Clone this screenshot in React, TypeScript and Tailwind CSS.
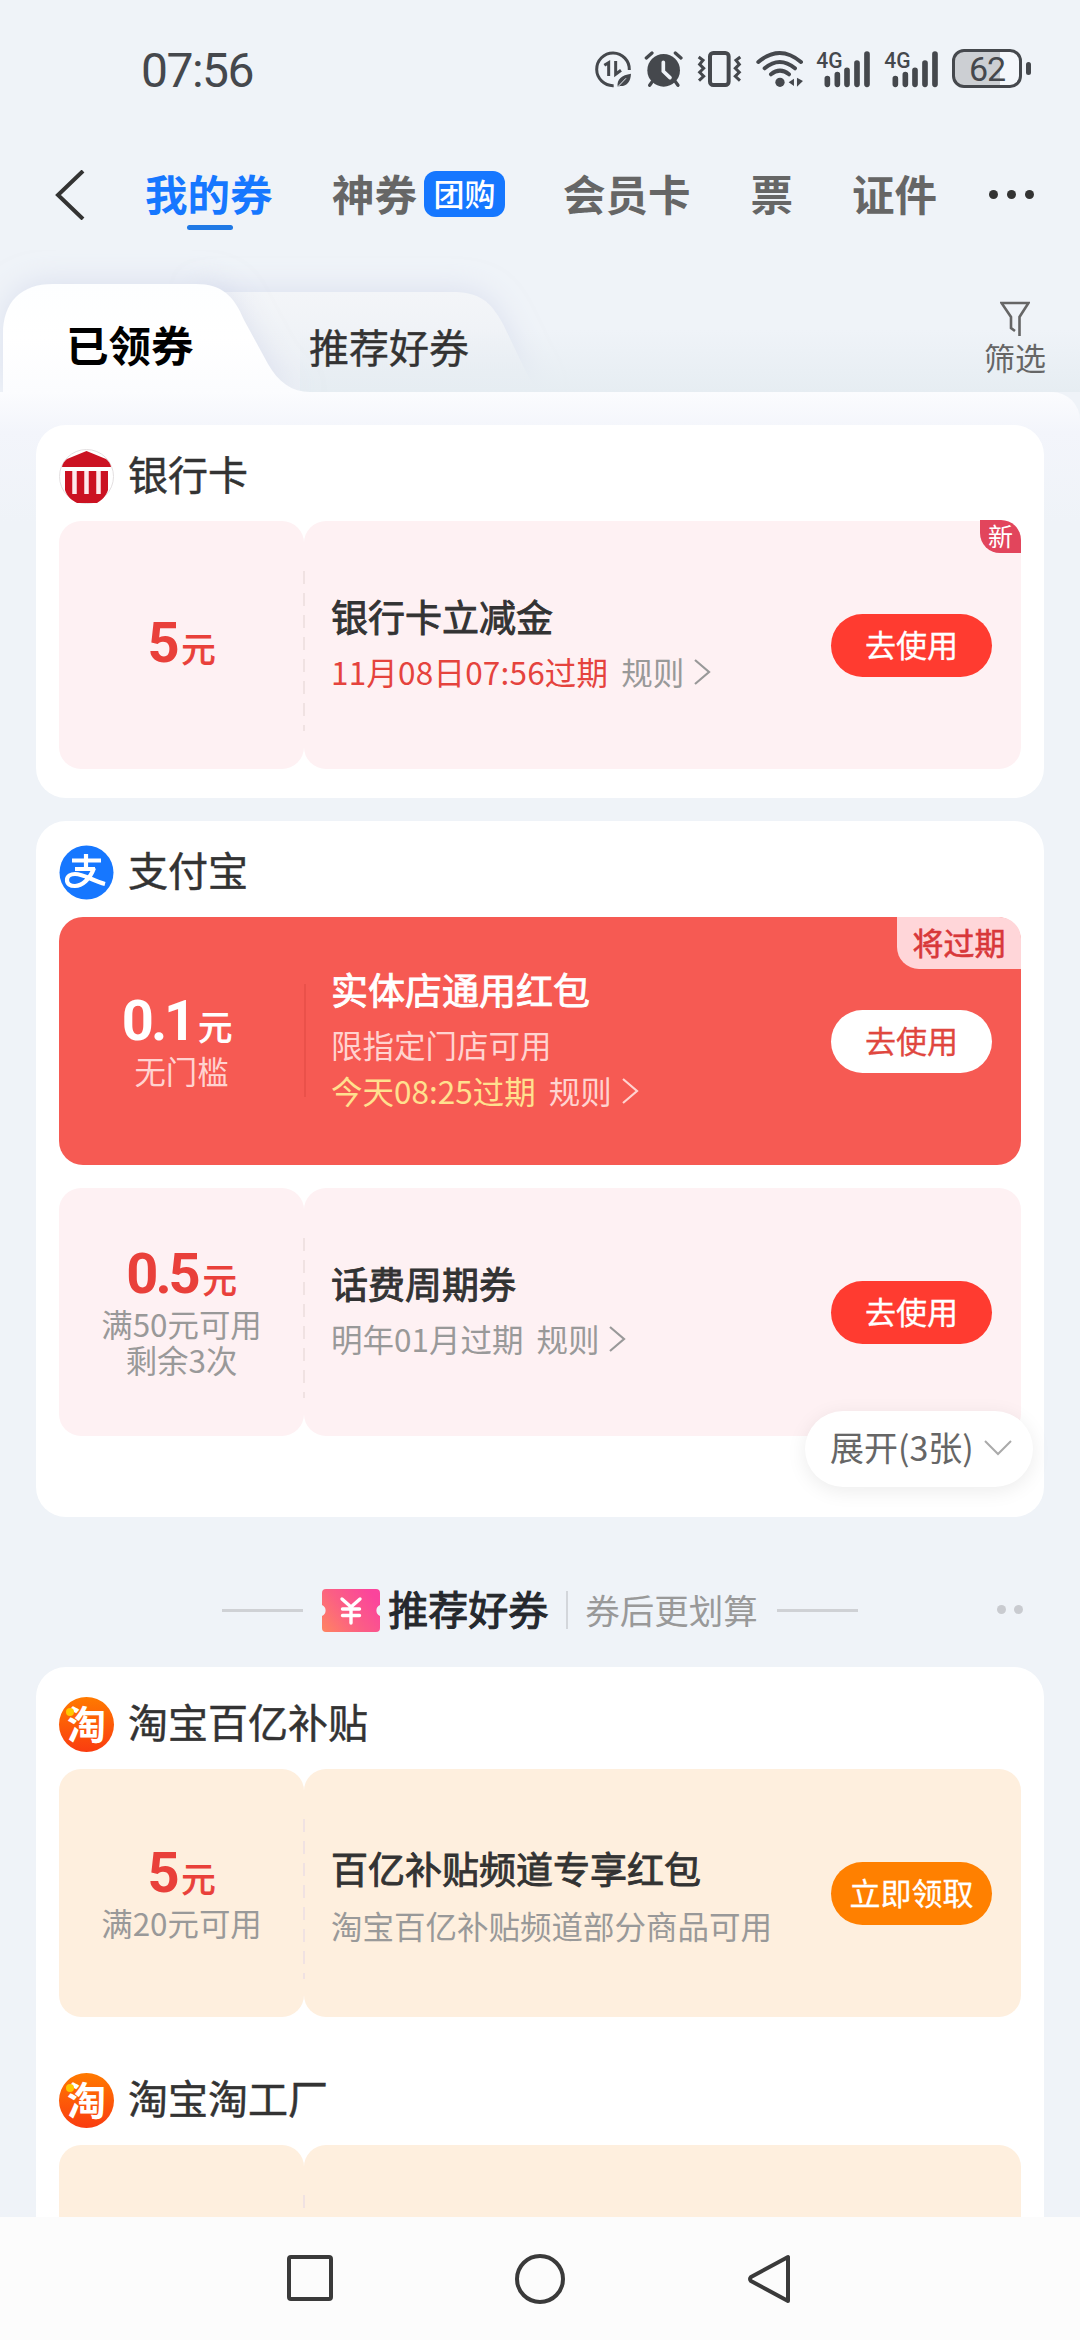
import React from 'react';
import clsx from 'clsx';

type Tone = 'pink' | 'red' | 'orange';

interface CouponData {
  tone: Tone;
  amount: string;
  conditions?: string[];
  title: string;
  desc?: string;
  expire?: string;
  expireClass?: string;
  action: string;
  tag?: React.ReactNode;
}

const BANK_COUPON: CouponData = {
  tone: 'pink',
  amount: '5',
  title: '银行卡立减金',
  expire: '11月08日07:56过期',
  expireClass: 'text-[#e5433d] tracking-[0.2px]',
  action: '去使用',
};

const SHOP_COUPON: CouponData = {
  tone: 'red',
  amount: '0.1',
  conditions: ['无门槛'],
  title: '实体店通用红包',
  desc: '限指定门店可用',
  expire: '今天08:25过期',
  expireClass: 'text-[#ffe08f]',
  action: '去使用',
};

const PHONE_COUPON: CouponData = {
  tone: 'pink',
  amount: '0.5',
  conditions: ['满50元可用', '剩余3次'],
  title: '话费周期券',
  expire: '明年01月过期',
  expireClass: 'text-[#999]',
  action: '去使用',
};

const TAOBAO_COUPON: CouponData = {
  tone: 'orange',
  amount: '5',
  conditions: ['满20元可用'],
  title: '百亿补贴频道专享红包',
  desc: '淘宝百亿补贴频道部分商品可用',
  action: '立即领取',
};

export default function App() {
  return (
    <div className="w-[1080px] h-[2340px] overflow-hidden flex flex-col bg-[#eff3f8] font-['Noto_Sans_CJK_SC',sans-serif] text-[#333] whitespace-nowrap">
      <StatusBar />
      <TopNav />
      <CouponTabs />

      <main className="flex-1 min-h-0 overflow-hidden px-9 pt-[33px] bg-[linear-gradient(to_bottom,#fbfcfe_0,#f3f5fb_40px,#eff3f8_130px)] rounded-tr-[28px]">
        <section className="h-[373px] rounded-[30px] bg-white px-[23px] pt-6">
          <CardTitle icon={<BankIcon />} text="银行卡" />
          <div className="mt-[18px]">
            <Coupon
              {...BANK_COUPON}
              tag={
                <span className="absolute right-0 -top-px h-[33px] w-[41px] rounded-tr-[20px] rounded-bl-[20px] bg-[#e2455c] text-white text-[25px] leading-[30px] text-center">
                  新
                </span>
              }
            />
          </div>
        </section>

        <section className="relative mt-[23px] h-[696px] rounded-[30px] bg-white px-[23px] pt-6">
          <CardTitle icon={<AlipayIcon />} text="支付宝" />
          <div className="mt-[18px] flex flex-col gap-[23px]">
            <Coupon
              {...SHOP_COUPON}
              tag={
                <span className="absolute right-0 top-0 h-[52px] w-[124px] rounded-tr-[22px] rounded-bl-[22px] bg-[#ffd6d9] text-[#d8383a] [-webkit-text-stroke:0.6px] text-[31px] leading-[50px] text-center">
                  将过期
                </span>
              }
            />
            <Coupon {...PHONE_COUPON} />
          </div>
          <button className="absolute right-[11px] bottom-[30px] h-[76px] w-[228px] rounded-full bg-white pl-[25px] pb-[2px] flex items-center gap-[10px] text-[34px] leading-[72px] text-[#666] shadow-[0_4px_20px_rgba(0,0,0,0.08)]">
            <span className="-mt-[2px]">展开(3张)</span>
            <svg width="28" height="16" viewBox="0 0 28 16" fill="none" stroke="#aaa" strokeWidth="2">
              <path d="M1 1l13 13L27 1" />
            </svg>
          </button>
        </section>

        <RecommendHeader />

        <section className="h-[700px] rounded-t-[30px] bg-white px-[23px] pt-[30px]">
          <CardTitle icon={<TaobaoIcon />} text="淘宝百亿补贴" />
          <div className="mt-[18px]">
            <Coupon {...TAOBAO_COUPON} />
          </div>
          <div className="mt-14">
            <CardTitle icon={<TaobaoIcon />} text="淘宝淘工厂" />
          </div>
          <div className="mt-[18px]">
            <Coupon tone="orange" amount="" title="" action="" />
          </div>
        </section>
      </main>

      <SystemNav />
    </div>
  );
}

function StatusBar() {
  return (
    <header className="h-[140px] shrink-0 flex items-start pl-[141px] pr-[49px] pt-[49px] text-[#45484d]">
      <span className="mt-px h-[39px] flex-1 font-['Roboto',sans-serif] text-[48px] leading-[41px] tracking-[-1.5px]">
        07:56
      </span>

      {/* 省流量 */}
      <svg width="37" height="39.3" viewBox="97 57 111 118" fill="none" stroke="currentColor" strokeWidth="9">
        <path d="M153 167A49 49 0 1 1 200 120" />
        <path d="M125 106l13-8v40M159 93v40l16-12" strokeWidth="9" />
        <path d="M165 171c-3-24 12-36 40-40-1 24-12 38-33 37z" fill="currentColor" stroke="none" />
        <path d="M164 172l26-27" stroke="#eff3f8" strokeWidth="3" />
      </svg>
      {/* 闹钟 */}
      <svg className="ml-[12px]" width="39.3" height="39.3" viewBox="248 57 118 118" fill="none" stroke="currentColor" strokeLinecap="round">
        <circle cx="307" cy="121" r="49" fill="currentColor" stroke="none" />
        <path d="M255 84l17-15M359 84l-17-15" strokeWidth="10" />
        <path d="M275 152l-10 14M340 152l10 14" strokeWidth="10" />
        <path d="M306 97v27l20 19" stroke="#eff3f8" strokeWidth="11" />
      </svg>
      {/* 振动 */}
      <svg className="ml-[14px]" width="45.3" height="39.3" viewBox="408 57 136 118" fill="none" stroke="currentColor">
        <rect x="447" y="69" width="56" height="96" rx="10" strokeWidth="12" />
        <path d="M413 81l13 10-10 12 12 12-12 12 12 12-14 13" strokeWidth="9" />
        <path d="M538 81l-13 10 10 12-12 12 12 12-12 12 14 13" strokeWidth="9" />
      </svg>
      {/* WiFi */}
      <svg className="ml-[13px]" width="47.3" height="39.3" viewBox="584 57 142 118" fill="none" stroke="currentColor" strokeWidth="12" strokeLinecap="round">
        <path d="M591 96q64-54 128 0M610 115q45-38 91 0M629 133q27-22 54 0" />
        <circle cx="656" cy="157" r="14" fill="currentColor" stroke="none" />
        <path d="M698 146v22l-16-11zM707 143v27l18-17z" fill="currentColor" stroke="none" />
      </svg>
      <Signal className="ml-[13px]" />
      <Signal className="ml-[13px]" />

      <div className="ml-[13px] flex items-center gap-[4px]">
        <div className="h-[39px] w-[70px] rounded-[12px] border-[3px] border-current bg-[linear-gradient(to_right,#cccfd3_70%,#f4f7fb_70%)] font-['Roboto',sans-serif] text-[34px] leading-[34px] tracking-[-1px] text-center">
          62
        </div>
        <div className="h-[13px] w-[5px] rounded-full bg-[#45484d]" />
      </div>
    </header>
  );
}

function Signal({ className }: { className?: string }) {
  return (
    <svg className={clsx('overflow-visible', className)} width="55" height="39.3" viewBox="767 57 165 118" fill="none" stroke="currentColor" strokeWidth="17" strokeLinecap="round">
      <text x="768" y="115" fontSize="67" fontWeight="500" textLength="79" lengthAdjust="spacingAndGlyphs" fontFamily="Roboto, sans-serif" fill="currentColor" stroke="none">
        4G
      </text>
      <path d="M801 146v17M831 134v29M860 121v42M890 99v64M920 72v91" />
    </svg>
  );
}

function TopNav() {
  return (
    <nav className="h-[110px] shrink-0 flex items-center pl-[54px] text-[42.5px] leading-[60px] font-bold text-[#666]">
      <svg width="31" height="50" viewBox="0 0 31 50" fill="none" stroke="#333" strokeWidth="4">
        <path d="M29 1L4 25l25 24" />
      </svg>
      <div className="relative ml-[60px] w-[128px] text-[#1677ff]">
        <span className="relative -top-[2px]">我的券</span>
        <span className="absolute left-[42px] -bottom-[5px] h-[5px] w-[46px] rounded-full bg-[#2079e5]" />
      </div>
      <span className="ml-[59px] -mt-1">神券</span>
      <span className="ml-[7px] -mt-[2px] h-[46px] w-[81px] rounded-[12px] bg-[#1677ff] text-[31px] leading-[43px] font-medium text-white text-center">
        团购
      </span>
      <span className="ml-[58px] -mt-1">会员卡</span>
      <span className="ml-[60px] -mt-1">票</span>
      <span className="ml-[59px] -mt-1">证件</span>
      <span className="ml-[52px] -mt-[2px] flex gap-[9px]">
        <i className="size-[9px] rounded-full bg-[#333]" />
        <i className="size-[9px] rounded-full bg-[#333]" />
        <i className="size-[9px] rounded-full bg-[#333]" />
      </span>
    </nav>
  );
}

function CouponTabs() {
  return (
    <div className="relative h-[142px] shrink-0 flex">
      {/* 标签页背景形状 */}
      <svg className="absolute left-0 top-0" width="1080" height="142" viewBox="0 0 1080 142" fill="none">
        <defs>
          <linearGradient id="tabOn" x1="0" y1="34" x2="0" y2="142" gradientUnits="userSpaceOnUse">
            <stop offset="0" stopColor="#fdfeff" />
            <stop offset="0.5" stopColor="#ffffff" />
            <stop offset="1" stopColor="#fbfcfe" />
          </linearGradient>
          <linearGradient id="tabOff" x1="0" y1="42" x2="0" y2="142" gradientUnits="userSpaceOnUse">
            <stop offset="0" stopColor="#f3f5f8" />
            <stop offset="1" stopColor="#ebeff5" />
          </linearGradient>
          <linearGradient id="stripShade" x1="0" y1="80" x2="0" y2="142" gradientUnits="userSpaceOnUse">
            <stop offset="0" stopColor="#e6edf2" stopOpacity="0" />
            <stop offset="1" stopColor="#e6edf2" />
          </linearGradient>
          <filter id="tabShadow" x="-20%" y="-40%" width="140%" height="180%">
            <feDropShadow dx="0" dy="-3" stdDeviation="14" floodColor="#c9cfe6" floodOpacity="0.5" />
          </filter>
        </defs>
        <path d="M200 42H452c28 0 39 10 51 32l22 46c6 12 12 20 18 22H200z" fill="url(#tabOff)" filter="url(#tabShadow)" />
        <rect x="300" y="80" width="780" height="62" fill="url(#stripShade)" />
        <path d="M3 142V84c0-32 18-50 50-50H196c26 0 38 12 48 36l24 44c10 18 24 28 42 28z" fill="url(#tabOn)" filter="url(#tabShadow)" />
      </svg>
      <div className="relative w-[261px] pl-[66px] pt-[64px] text-[42.5px] leading-[60px] font-bold text-black">已领券</div>
      <div className="relative pl-[48px] pt-[66px] text-[40px] leading-[60px] [-webkit-text-stroke:0.4px]">推荐好券</div>
      <div className="relative ml-auto mr-[34px] pt-[51px] flex flex-col items-center text-[31px] leading-[40px] text-[#666]">
        <svg width="30" height="36" viewBox="0 0 30 36" fill="none" stroke="#666" strokeWidth="2.6">
          <path d="M19.5 35V16L28.5 2H1.5L11 16V27l4 3" />
        </svg>
        <span>筛选</span>
      </div>
    </div>
  );
}

function CardTitle({ icon, text }: { icon: React.ReactNode; text: string }) {
  return (
    <div className="h-[54px] flex items-center gap-[14px]">
      {icon}
      <h2 className="-mt-[7px] text-[40px] leading-[54px] [-webkit-text-stroke:0.5px]">{text}</h2>
    </div>
  );
}

function Coupon({ tone, amount, conditions, title, desc, expire, expireClass, action, tag }: CouponData) {
  const onRed = tone === 'red';
  const bg = clsx(
    tone === 'pink' && 'bg-[#fef1f3]',
    tone === 'red' && 'bg-[#f65a53]',
    tone === 'orange' && 'bg-[#feefde]',
  );
  const sub = onRed ? 'text-[#ffd3d0]' : 'text-[#999]';

  return (
    <div className="relative h-[248px] flex">
      <div
        className={clsx(
          'w-[245px] flex flex-col items-center justify-center pt-[2px]',
          bg,
          onRed ? 'rounded-l-[24px]' : 'rounded-[22px]',
        )}
      >
        {amount && (
          <div className={clsx('mb-[2px] flex items-baseline', onRed ? 'mr-[9px] text-white' : 'text-[#e9403a]')}>
            <span className="font-['Roboto',sans-serif] font-bold text-[56px] leading-[50px] tracking-[-3px]">{amount}</span>
            <span className="ml-[5px] text-[34px] leading-[50px] [-webkit-text-stroke:1px]">元</span>
          </div>
        )}
        {conditions?.map((c) => (
          <p key={c} className={clsx('text-[31.4px] leading-[36px]', sub)}>
            {c}
          </p>
        ))}
      </div>

      <div
        className={clsx(
          'flex-1 flex items-center pl-[27px] pr-[29px]',
          bg,
          onRed ? 'rounded-r-[24px]' : 'rounded-[22px]',
        )}
      >
        <div className={clsx('flex-1', tone === 'pink' && 'pb-[6px]', onRed && 'pb-[7px]', tone === 'orange' && 'pt-[3px]')}>
          <h3
            className={clsx(
              'text-[37px] leading-[52px] [-webkit-text-stroke:0.9px]',
              onRed ? 'text-white' : 'text-[#333]',
            )}
          >
            {title}
          </h3>
          {desc && <p className={clsx('text-[31.5px] leading-[46px]', onRed ? 'mt-[6px]' : 'mt-[8px]', sub)}>{desc}</p>}
          {expire && (
            <p className={clsx('flex items-center text-[31.5px] leading-[46px]', !desc && 'mt-[6px]')}>
              <span className={expireClass}>{expire}</span>
              <span className={clsx('ml-[13px]', sub)}>规则</span>
              <svg
                className={clsx('ml-[9px] mt-[2px]', sub)}
                width="18"
                height="26"
                viewBox="0 0 18 26"
                fill="none"
                stroke="currentColor"
                strokeWidth="2.2"
              >
                <path d="M2 1l14 12L2 25" />
              </svg>
            </p>
          )}
        </div>
        {action && (
          <button
            className={clsx(
              'h-[63px] w-[161px] pb-[3px] rounded-full text-[31px] leading-[60px] [-webkit-text-stroke:0.3px]',
              tone === 'pink' && 'bg-[#ff3b30] text-white',
              tone === 'red' && 'bg-white text-[#e0473f]',
              tone === 'orange' && 'bg-[#ff8000] text-white',
            )}
          >
            {action}
          </button>
        )}
      </div>

      {/* 左右分隔线 */}
      {onRed ? (
        <span className="absolute left-[245px] top-[67px] h-[113px] w-[2px] bg-[#ea514a]" />
      ) : (
        <span className="absolute left-[244px] top-[50px] h-[160px] w-[2px] bg-[repeating-linear-gradient(to_bottom,#f0e2e2_0,#f0e2e2_13px,transparent_13px,transparent_22px)]" />
      )}
      {tag}
    </div>
  );
}

function RecommendHeader() {
  return (
    <div className="relative h-[150px]">
      <div className="h-[186px] flex items-center justify-center">
        <span className="h-[3px] w-[81px] bg-[#cfd1d5]" />
        <svg className="ml-[19px]" width="58" height="43" viewBox="0 0 58 43" fill="none">
          <defs>
            <linearGradient id="ticket" x1="0" y1="43" x2="50" y2="4" gradientUnits="userSpaceOnUse">
              <stop offset="0" stopColor="#ff8560" />
              <stop offset="0.5" stopColor="#fb5f84" />
              <stop offset="1" stopColor="#fb449c" />
            </linearGradient>
          </defs>
          <path d="M4 0h50q4 0 4 4v12a6 6 0 0 0 0 11v12q0 4-4 4H4q-4 0-4-4V27a6 6 0 0 0 0-11V4q0-4 4-4z" fill="url(#ticket)" />
          <path d="M20 10l9 8 9-8M20.500 20h17M20.500 26.500h17M29 18v16" stroke="#fff" strokeWidth="3.400" strokeLinecap="round" />
        </svg>
        <span className="ml-[8px] -mt-[4px] text-[40px] leading-[56px] [-webkit-text-stroke:1.1px] text-[#25282d]">推荐好券</span>
        <span className="ml-[18px] h-[38px] w-[2px] bg-[#d3d6db]" />
        <span className="ml-[17px] -mt-[3px] text-[34.5px] leading-[56px] text-[#999]">券后更划算</span>
        <span className="ml-[19px] h-[3px] w-[81px] bg-[#cfd1d5]" />
      </div>
      <div className="absolute right-[21px] top-[88px] flex gap-[8px]">
        <i className="size-[9px] rounded-full bg-[#c9cbd0]" />
        <i className="size-[9px] rounded-full bg-[#c9cbd0]" />
      </div>
    </div>
  );
}

function BankIcon() {
  return (
    <svg width="55" height="55" viewBox="0 0 55 55">
      <circle cx="27.5" cy="27.5" r="27" fill="#fff" stroke="#e3dfe0" />
      <path d="M27.500 2L47 10q4 3 5 8H3q1-5 5-8z" fill="#cb1222" />
      <path d="M6 22h43v19c-2 6-6 10-11 13H18C12 51 8 47 6 41z" fill="#cb1222" />
      <path d="M15.500 22v23M27.500 22v23M39.500 22v23" stroke="#fdeaec" strokeWidth="4.500" />
    </svg>
  );
}

function AlipayIcon() {
  return (
    <svg width="55" height="55" viewBox="0 0 55 55" fill="none" stroke="#fff">
      <circle cx="27.5" cy="27.5" r="27" fill="#1677ff" stroke="none" />
      <path d="M13 15.500h29M27 9v15M16 24h20" strokeWidth="4.200" />
      <path d="M35 23c-4 11-12 18-19 18-5 0-8-2-8-6s4-6 8-6c9 0 18 7 30 10" strokeWidth="4.200" />
    </svg>
  );
}

function TaobaoIcon() {
  return (
    <div className="relative size-[55px] rounded-full bg-[linear-gradient(to_bottom,#ff7a00,#fa3c10)] text-center text-[39px] leading-[51px] font-bold text-white">
      淘
      <i className="absolute left-[7px] top-[11px] size-[8px] rounded-full bg-[#ffc800]" />
    </div>
  );
}

function SystemNav() {
  return (
    <footer className="h-[123px] shrink-0 flex items-start bg-[#fcfcfc] pl-[286px] pt-[36px]">
      <svg width="47" height="50" viewBox="0 0 47 50" fill="none" stroke="#3a3a3a" strokeWidth="4">
        <rect x="3" y="4" width="42" height="42" rx="2" />
      </svg>
      <svg className="ml-[182px]" width="50" height="52" viewBox="0 0 50 52" fill="none" stroke="#3a3a3a" strokeWidth="4">
        <circle cx="25" cy="26" r="23" />
      </svg>
      <svg className="ml-[181px]" width="46" height="52" viewBox="0 0 46 52" fill="none" stroke="#3a3a3a" strokeWidth="4" strokeLinejoin="round">
        <path d="M42 4v44L5 28q-2-2 0-4z" />
      </svg>
    </footer>
  );
}
